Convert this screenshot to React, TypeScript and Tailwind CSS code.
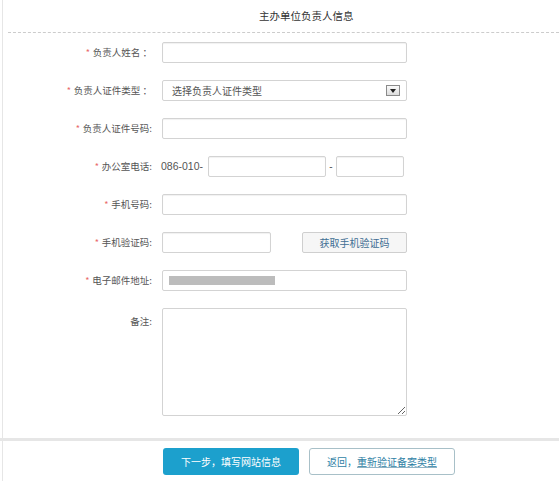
import type { ReactNode } from "react";

const cjk = "font-['Microsoft_YaHei','Noto_Sans_CJK_SC',sans-serif]";

function Label({ children, required = true }: { children: ReactNode; required?: boolean }) {
  return (
    <div className="flex w-[149px] shrink-0 items-center justify-end text-[9.5px] text-[#555]">
      {required && <span className="mr-[3px] text-[9px] text-[#e96a6a]">*</span>}
      {children}
    </div>
  );
}

function Input({ className = "w-[245px]" }: { className?: string }) {
  return (
    <div
      className={`h-[21px] rounded-[2px] border border-[#d3d3d3] bg-white shadow-[inset_0_1px_1px_rgba(0,0,0,0.06)] ${className}`}
    />
  );
}

export default function App() {
  const rows: { label: string; field: ReactNode }[] = [
    { label: "负责人姓名 ：", field: <Input /> },
    {
      label: "负责人证件类型 ：",
      field: (
        <div className="flex h-[21px] w-[245px] items-center justify-between rounded-[2px] border border-[#d3d3d3] bg-white pl-[9px] pr-[6px] text-[10px] text-[#555]">
          <span>选择负责人证件类型</span>
          <span className="flex h-[11px] w-[14px] items-center justify-center border border-[#8a8a8a] bg-gradient-to-b from-[#fafafa] to-[#dcdcdc]">
            <svg width="6" height="4" viewBox="0 0 6 4">
              <path d="M0 0h6L3 4z" fill="#222" />
            </svg>
          </span>
        </div>
      ),
    },
    { label: "负责人证件号码:", field: <Input /> },
    {
      label: "办公室电话:",
      field: (
        <div className="flex h-[21px] items-center">
          <span className="ml-[-1px] w-[47px] font-['Liberation_Sans',sans-serif] text-[10.5px] text-[#555]">
            086-010-
          </span>
          <Input className="w-[118px]" />
          <span className="w-[10px] text-center font-['Liberation_Sans',sans-serif] text-[10px] text-[#555]">-</span>
          <Input className="w-[68px]" />
        </div>
      ),
    },
    { label: "手机号码:", field: <Input /> },
    {
      label: "手机验证码:",
      field: (
        <div className="flex h-[21px] items-center gap-[31px]">
          <Input className="w-[109px]" />
          <button className="flex h-[21px] w-[105px] items-center justify-center rounded-[2px] border border-[#cfcfcf] bg-[#f6f6f6] text-[10px] text-[#3f6e93]">
            获取手机验证码
          </button>
        </div>
      ),
    },
    {
      label: "电子邮件地址:",
      field: (
        <div className="flex h-[21px] w-[245px] items-center rounded-[2px] border border-[#d3d3d3] bg-white pl-[6px]">
          <div className="h-[9px] w-[106px] bg-[#bcbcbc]" />
        </div>
      ),
    },
  ];

  return (
    <div className={`min-h-screen bg-white ${cjk}`}>
      <div className="ml-[2px] border-l border-[#e6e6e6] pb-[22px]">
        <div className="flex h-[32px] items-center pl-[256px] text-[10.5px] text-[#333]">
          主办单位负责人信息
        </div>
        <div className="ml-[5px] border-t border-dashed border-[#cccccc]" />
        <div className="flex flex-col gap-[17px] pt-[9px]">
          {rows.map((r) => (
            <div key={r.label} className="flex h-[21px] items-center gap-[10px]">
              <Label>{r.label}</Label>
              {r.field}
            </div>
          ))}
          <div className="flex gap-[10px]">
            <div className="flex w-[149px] shrink-0 justify-end pt-[6px] text-[9.5px] text-[#555]">备注:</div>
            <textarea className="h-[108px] w-[245px] rounded-[2px] border border-[#d3d3d3] bg-white outline-none" />
          </div>
        </div>
      </div>
      <div className="h-[3px] bg-[#e6e6e6]" />
      <div className="ml-[2px] flex min-h-[40px] gap-[10px] border-l border-[#e6e6e6] pl-[160px] pt-[7px]">
        <button className="flex h-[27px] w-[136px] items-center justify-center rounded-[3px] bg-[#1ca0cd] text-[10px] text-white">
          下一步，填写网站信息
        </button>
        <button className="flex h-[27px] w-[146px] items-center justify-center rounded-[3px] border border-[#a8c0c8] bg-white text-[10px] text-[#2f7fa5]">
          返回，<span className="underline decoration-[#8fb2c4]">重新验证备案类型</span>
        </button>
      </div>
    </div>
  );
}
